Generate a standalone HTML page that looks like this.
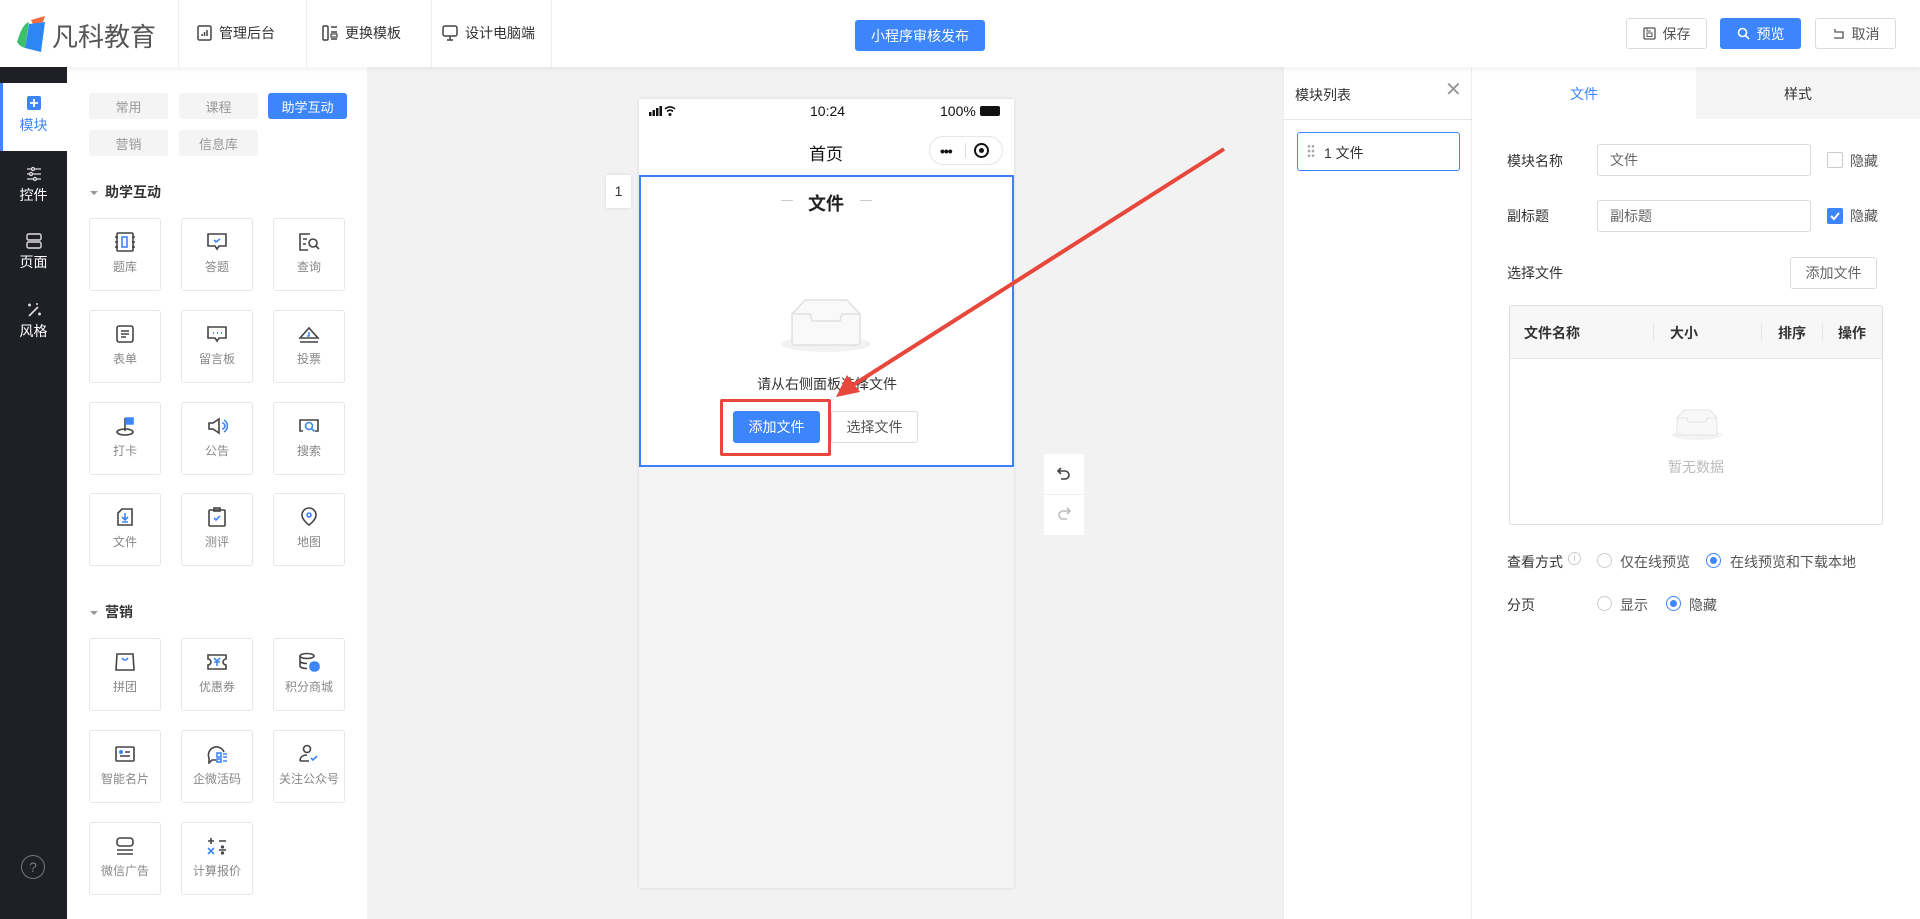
<!DOCTYPE html>
<html><head><meta charset="utf-8"><style>
*{margin:0;padding:0;box-sizing:border-box}
body{width:1920px;height:919px;overflow:hidden;font-family:"Liberation Sans","Noto Sans CJK SC",sans-serif;font-size:14px;color:#333;background:#f2f2f2;position:relative}
.a{position:absolute}
.hdr{left:0;top:0;width:1920px;height:67px;background:#fff;box-shadow:0 2px 6px rgba(0,0,0,.06);z-index:2}
.vd{top:0;height:67px;width:1px;background:#eee}
.nav{top:23px;font-size:14px;color:#333;display:flex;align-items:center;gap:7px}
.btn{border:1px solid #dcdcdc;border-radius:3px;background:#fff;display:flex;align-items:center;justify-content:center;gap:7px;font-size:14px;color:#555}
.blue{background:#3d85fb;color:#fff;border-color:#3d85fb}
.side{left:0;top:67px;width:67px;height:852px;background:#1e2025}
.si{left:0;width:67px;text-align:center;color:#fff;font-size:14px}
.p2{left:67px;top:67px;width:300px;height:852px;background:#fff}
.tab{height:26px;width:79px;border-radius:3px;background:#f4f4f4;color:#999;font-size:13px;display:flex;align-items:center;justify-content:center}
.card{width:72px;height:73px;border:1px solid #e6e6e6;border-radius:3px;background:#fff;text-align:center;font-size:12px;color:#888}
.card svg{display:block;margin:13px auto 6px}
.sec{font-size:14px;font-weight:bold;color:#333}
.sec:before{content:"";position:absolute;left:-15px;top:5px;border:4px solid transparent;border-top-color:#999;border-left-color:#999;transform:rotate(225deg) scale(.7)}
.lbl{font-size:14px;color:#333}
.inp{border:1px solid #dcdcdc;border-radius:3px;height:32px;padding-left:12px;line-height:30px;color:#666;font-size:14px}
.rad{width:15px;height:15px;border-radius:50%;border:1px solid #ccc;background:#fff}
.rad.on{border-color:#3d85fb}
.rad.on:after{content:"";position:absolute;left:3px;top:3px;width:7px;height:7px;border-radius:50%;background:#3d85fb}
</style></head><body>
<div class="a hdr">
 <svg class="a" style="left:15px;top:14px" width="34" height="40" viewBox="0 0 34 40"><path d="M16 6 L30 2 L28 8 L18 10Z" fill="#f26b3a"/><path d="M4 22 Q8 10 14 8 L10 34 Q4 32 2 28Z" fill="#3cc06a"/><path d="M14 10 L30 8 L26 38 L10 34Z" fill="#2e86f5"/></svg>
 <div class="a" style="left:52px;top:17px;font-size:26px;color:#555;letter-spacing:0px">凡科教育</div>
 <div class="a vd" style="left:178px"></div><div class="a vd" style="left:306px"></div><div class="a vd" style="left:431px"></div><div class="a vd" style="left:551px"></div>
 <div class="a nav" style="left:197px"><svg width="15" height="16" viewBox="0 0 15 16"><rect x="1" y="1" width="13" height="14" rx="1.5" fill="none" stroke="#444" stroke-width="1.5"/><path d="M5 11V9M7.5 11V7M10 11V5" stroke="#444" stroke-width="1.5"/></svg>管理后台</div>
 <div class="a nav" style="left:322px"><svg width="16" height="16" viewBox="0 0 16 16"><rect x="1" y="1" width="5" height="14" rx="1" fill="none" stroke="#444" stroke-width="1.5"/><path d="M9 2h6M9 7h6M9 14h6" stroke="#444" stroke-width="1.5"/><rect x="9" y="9" width="6" height="3" fill="none" stroke="#444" stroke-width="1.2"/></svg>更换模板</div>
 <div class="a nav" style="left:442px"><svg width="16" height="16" viewBox="0 0 16 16"><rect x="1" y="1" width="14" height="10" rx="2" fill="none" stroke="#444" stroke-width="1.5"/><path d="M8 11v4M5 15h6" stroke="#444" stroke-width="1.5"/></svg>设计电脑端</div>
 <div class="a btn blue" style="left:855px;top:20px;width:130px;height:31px;font-size:14px">小程序审核发布</div>
 <div class="a btn" style="left:1626px;top:18px;width:81px;height:31px"><svg width="13" height="13" viewBox="0 0 13 13"><rect x="1" y="1" width="11" height="11" rx="1" fill="none" stroke="#555" stroke-width="1.3"/><rect x="4" y="6" width="5" height="3.5" fill="none" stroke="#555"/><path d="M4 1v3h4" stroke="#555" fill="none"/></svg>保存</div>
 <div class="a btn blue" style="left:1720px;top:18px;width:81px;height:31px"><svg width="13" height="13" viewBox="0 0 13 13"><circle cx="5.5" cy="5.5" r="4" fill="none" stroke="#fff" stroke-width="1.6"/><path d="M8.5 8.5L12 12" stroke="#fff" stroke-width="1.6"/></svg>预览</div>
 <div class="a btn" style="left:1815px;top:18px;width:81px;height:31px"><svg width="13" height="13" viewBox="0 0 13 13"><path d="M3 2v3h8v6H2" fill="none" stroke="#555" stroke-width="1.3"/></svg>取消</div>
</div>

<div class="a side"></div>
<div class="a" style="left:0;top:83px;width:67px;height:68px;background:#fff;border-left:3px solid #3d85fb"></div>
<div class="a si" style="top:96px;color:#3d85fb"><svg width="14" height="14" viewBox="0 0 14 14"><rect width="14" height="14" rx="2" fill="#3d85fb"/><path d="M7 3v8M3 7h8" stroke="#fff" stroke-width="1.8"/></svg><div style="margin-top:2px">模块</div></div>
<div class="a si" style="top:166px"><svg width="16" height="16" viewBox="0 0 16 16" fill="none" stroke="#ddd" stroke-width="1.3"><path d="M1 3h4M9 3h6M1 8h2M7 8h8M1 13h6M11 13h4"/><circle cx="7" cy="3" r="1.5"/><circle cx="5" cy="8" r="1.5"/><circle cx="9" cy="13" r="1.5"/></svg><div>控件</div></div>
<div class="a si" style="top:233px"><svg width="16" height="16" viewBox="0 0 16 16" fill="none" stroke="#ddd" stroke-width="1.4"><rect x="1" y="1" width="14" height="6" rx="1.5"/><rect x="1" y="9" width="14" height="6" rx="1.5"/></svg><div>页面</div></div>
<div class="a si" style="top:302px"><svg width="16" height="16" viewBox="0 0 16 16" fill="none" stroke="#ddd" stroke-width="1.6"><path d="M3 14L12 5M2 3h3M3.5 1.5v3M12 12h3M13.5 10.5v3M10 2h2"/></svg><div>风格</div></div>
<div class="a" style="left:21px;top:855px;width:24px;height:24px;border:1px solid #777;border-radius:50%;color:#777;text-align:center;line-height:22px;font-size:14px">?</div>

<div class="a p2">
 <div class="a tab" style="left:22px;top:26px">常用</div>
 <div class="a tab" style="left:112px;top:26px">课程</div>
 <div class="a tab" style="left:201px;top:26px;background:#3d85fb;color:#fff">助学互动</div>
 <div class="a tab" style="left:22px;top:63px">营销</div>
 <div class="a tab" style="left:112px;top:63px">信息库</div>
 <div class="a sec" style="left:38px;top:115px">助学互动</div>
 <div class="a sec" style="left:38px;top:535px">营销</div>
</div>

<div class="a card" style="left:89px;top:218px"><svg width="22" height="20" viewBox="0 0 22 20" fill="none" stroke="#444" stroke-width="1.6"><rect x="3" y="1" width="16" height="18" rx="1"/><path d="M1 5h3M1 10h3M1 15h3M18 5h3M18 10h3M18 15h3"/><rect x="8" y="5" width="5" height="10" stroke="#3d85fb"/></svg>题库</div>
<div class="a card" style="left:181px;top:218px"><svg width="22" height="20" viewBox="0 0 22 20" fill="none" stroke="#444" stroke-width="1.6"><path d="M2 2h18v12h-7l-2 3-2-3H2z"/><path d="M8 8l2 2 4-3" stroke="#3d85fb"/></svg>答题</div>
<div class="a card" style="left:273px;top:218px"><svg width="22" height="20" viewBox="0 0 22 20" fill="none" stroke="#444" stroke-width="1.6"><path d="M12 2H2v16h8M5 7h4M5 12h3" /><circle cx="15" cy="11" r="4"/><path d="M18 14l3 3"/></svg>查询</div>
<div class="a card" style="left:89px;top:310px"><svg width="22" height="20" viewBox="0 0 22 20" fill="none" stroke="#444" stroke-width="1.6"><rect x="3" y="2" width="16" height="16" rx="2"/><path d="M7 7h8M7 10h8M7 13h5"/></svg>表单</div>
<div class="a card" style="left:181px;top:310px"><svg width="22" height="20" viewBox="0 0 22 20" fill="none" stroke="#444" stroke-width="1.6"><path d="M2 3h18v11h-7l-2 3-2-3H2z"/><path d="M7 9h1M11 9h1M15 9h1" stroke="#3d85fb" stroke-width="2"/></svg>留言板</div>
<div class="a card" style="left:273px;top:310px"><svg width="22" height="20" viewBox="0 0 22 20" fill="none" stroke="#444" stroke-width="1.6"><path d="M2 14L11 4l9 10H2zM2 18h18"/><path d="M11 8v4h-2" stroke="#3d85fb"/></svg>投票</div>
<div class="a card" style="left:89px;top:402px"><svg width="22" height="20" viewBox="0 0 22 20" fill="none" stroke="#444" stroke-width="1.6"><path d="M11 2v13"/><ellipse cx="11" cy="16" rx="8" ry="3"/><path d="M12 2h7v6h-7z" fill="#3d85fb" stroke="#3d85fb"/></svg>打卡</div>
<div class="a card" style="left:181px;top:402px"><svg width="22" height="20" viewBox="0 0 22 20" fill="none" stroke="#444" stroke-width="1.6"><path d="M3 7h4l6-4v14l-6-4H3z"/><path d="M16 7a3 3 0 010 6M18 4a7 7 0 010 12" stroke="#3d85fb"/></svg>公告</div>
<div class="a card" style="left:273px;top:402px"><svg width="22" height="20" viewBox="0 0 22 20" fill="none" stroke="#444" stroke-width="1.6"><path d="M5 15H2V4h18v11h-3"/><circle cx="11" cy="10" r="3.5" stroke="#3d85fb"/><path d="M13.5 12.5l3 3" stroke="#3d85fb"/></svg>搜索</div>
<div class="a card" style="left:89px;top:493px"><svg width="22" height="20" viewBox="0 0 22 20" fill="none" stroke="#444" stroke-width="1.6"><path d="M8 2h10v16H4V6z"/><path d="M11 6v7M8 10l3 3 3-3M8 15h6" stroke="#3d85fb"/></svg>文件</div>
<div class="a card" style="left:181px;top:493px"><svg width="22" height="20" viewBox="0 0 22 20" fill="none" stroke="#444" stroke-width="1.6"><rect x="3" y="3" width="16" height="16" rx="1"/><rect x="8" y="1" width="6" height="3"/><path d="M8 11l2 2 4-4" stroke="#3d85fb"/></svg>测评</div>
<div class="a card" style="left:273px;top:493px"><svg width="22" height="20" viewBox="0 0 22 20" fill="none" stroke="#444" stroke-width="1.6"><path d="M11 18s-7-5-7-10a7 7 0 0114 0c0 5-7 10-7 10z"/><circle cx="11" cy="8" r="2" stroke="#3d85fb"/></svg>地图</div>
<div class="a card" style="left:89px;top:638px"><svg width="22" height="20" viewBox="0 0 22 20" fill="none" stroke="#444" stroke-width="1.6"><path d="M3 2h16l1 16H2z"/><path d="M8 6q3 4 6 0" stroke="#3d85fb"/></svg>拼团</div>
<div class="a card" style="left:181px;top:638px"><svg width="22" height="20" viewBox="0 0 22 20" fill="none" stroke="#444" stroke-width="1.6"><path d="M2 3h18v4a3 3 0 000 6v4H2v-4a3 3 0 000-6z"/><path d="M8 6l3 3 3-3M11 9v5M8 10h6" stroke="#3d85fb"/></svg>优惠券</div>
<div class="a card" style="left:273px;top:638px"><svg width="22" height="20" viewBox="0 0 22 20" fill="none" stroke="#444" stroke-width="1.6"><ellipse cx="9" cy="4" rx="7" ry="2.5"/><path d="M2 4v10c0 1.5 3 2.5 7 2.5M2 9c0 1.5 3 2.5 7 2.5"/><rect x="12" y="10" width="9" height="9" rx="4" fill="#3d85fb" stroke="#3d85fb"/></svg>积分商城</div>
<div class="a card" style="left:89px;top:730px"><svg width="22" height="20" viewBox="0 0 22 20" fill="none" stroke="#444" stroke-width="1.6"><rect x="2" y="3" width="18" height="14" rx="1"/><path d="M6 8h2M11 8h5M6 12h10"/><circle cx="7" cy="8" r="1.2" fill="#3d85fb" stroke="#3d85fb"/></svg>智能名片</div>
<div class="a card" style="left:181px;top:730px"><svg width="22" height="20" viewBox="0 0 22 20" fill="none" stroke="#444" stroke-width="1.6"><path d="M10 16H6l-3 3v-5a8 8 0 1115-6"/><rect x="11" y="9" width="4" height="4" stroke="#3d85fb"/><rect x="11" y="15" width="4" height="3" stroke="#3d85fb"/><path d="M17 10h4M17 13h4M17 17h4" stroke="#3d85fb"/></svg>企微活码</div>
<div class="a card" style="left:273px;top:730px"><svg width="22" height="20" viewBox="0 0 22 20" fill="none" stroke="#444" stroke-width="1.6"><circle cx="9" cy="5" r="3.5"/><path d="M2 17c0-4 3-6 7-6M2 17h9"/><path d="M13 14l2 2 4-4" stroke="#3d85fb"/></svg>关注公众号</div>
<div class="a card" style="left:89px;top:822px"><svg width="22" height="20" viewBox="0 0 22 20" fill="none" stroke="#444" stroke-width="1.6"><rect x="3" y="2" width="16" height="8" rx="3"/><path d="M3 14h16M3 18h16"/></svg>微信广告</div>
<div class="a card" style="left:181px;top:822px"><svg width="22" height="20" viewBox="0 0 22 20" fill="none" stroke="#444" stroke-width="1.6"><path d="M2 5h6M5 2v6M13 5h7M13 14h7"/><path d="M2 12l6 6M8 12l-6 6" stroke="#3d85fb"/><circle cx="16.5" cy="11" r=".8" fill="#444"/><circle cx="16.5" cy="17" r=".8" fill="#444"/></svg>计算报价</div>

<div class="a" style="left:639px;top:99px;width:375px;height:789px;background:#f3f3f3;box-shadow:0 0 3px rgba(0,0,0,.12)"></div>
<div class="a" style="left:639px;top:99px;width:375px;height:76px;background:#fff"></div>
<svg class="a" style="left:648px;top:104px" width="30" height="14" viewBox="0 0 30 14"><rect x="1" y="8" width="2.5" height="4" fill="#111"/><rect x="4.5" y="6" width="2.5" height="6" fill="#111"/><rect x="8" y="4" width="2.5" height="8" fill="#111"/><rect x="11.5" y="2" width="2.5" height="10" fill="#111"/><path d="M17 5a7 7 0 0110 0M19 7.5a4 4 0 016 0" stroke="#111" stroke-width="1.6" fill="none"/><circle cx="22" cy="10.5" r="1.5" fill="#111"/></svg>
<div class="a" style="left:810px;top:103px;font-size:14px;color:#111">10:24</div>
<div class="a" style="left:940px;top:103px;font-size:14px;color:#111">100%</div>
<div class="a" style="left:980px;top:106px;width:20px;height:10px;background:#111;border-radius:2px"></div>
<div class="a" style="left:809px;top:140px;font-size:17px;color:#111">首页</div>
<div class="a" style="left:929px;top:136px;width:74px;height:29px;border:1px solid #e6e6e6;border-radius:15px;background:#fff"></div>
<div class="a" style="left:940px;top:143px;font-size:14px;font-weight:bold;color:#111;letter-spacing:-1px">•••</div>
<div class="a" style="left:965px;top:143px;width:1px;height:15px;background:#ddd"></div>
<div class="a" style="left:974px;top:143px;width:15px;height:15px;border:2px solid #111;border-radius:50%"></div>
<div class="a" style="left:981px;top:150px;width:5px;height:5px;margin:-2px 0 0 -2px;background:#111;border-radius:50%"></div>
<div class="a" style="left:606px;top:175px;width:25px;height:33px;background:#fff;box-shadow:0 0 3px rgba(0,0,0,.12);text-align:center;line-height:33px;font-size:14px">1</div>
<div class="a" style="left:639px;top:175px;width:375px;height:292px;background:#fff;border:2px solid #3d7ff7"></div>
<div class="a" style="left:781px;top:200px;width:12px;height:1px;background:#ccc"></div>
<div class="a" style="left:860px;top:200px;width:12px;height:1px;background:#ccc"></div>
<div class="a" style="left:808px;top:190px;font-size:18px;font-weight:bold;color:#222">文件</div>
<svg class="a" style="left:778px;top:290px" width="96" height="64" viewBox="0 0 96 64"><ellipse cx="48" cy="54" rx="45" ry="8" fill="#f2f2f2"/><path d="M14 24L27 10h42l13 14v28a3 3 0 01-3 3H17a3 3 0 01-3-3z" fill="#f9f9f9" stroke="#e0e0e0" stroke-width="1.5"/><path d="M14 24h18l2 7h28l2-7h18" fill="none" stroke="#e0e0e0" stroke-width="1.5"/></svg>
<div class="a" style="left:757px;top:374px;font-size:14px;color:#333">请从右侧面板选择文件</div>
<div class="a btn blue" style="left:733px;top:411px;width:87px;height:32px;font-size:14px">添加文件</div>
<div class="a btn" style="left:831px;top:411px;width:87px;height:32px;font-size:14px">选择文件</div>
<div class="a" style="left:720px;top:399px;width:111px;height:57px;border:3px solid #e8473c;border-radius:2px"></div>
<div class="a" style="left:1044px;top:454px;width:40px;height:81px;background:#fff"></div>
<div class="a" style="left:1044px;top:494px;width:40px;height:1px;background:#eee"></div>
<svg class="a" style="left:1055px;top:465px" width="18" height="18" viewBox="0 0 18 18" fill="none" stroke="#444" stroke-width="1.6"><path d="M6 3L3 6l3 3M3 6h7a4 4 0 010 8H6"/></svg>
<svg class="a" style="left:1055px;top:505px" width="18" height="18" viewBox="0 0 18 18" fill="none" stroke="#bbb" stroke-width="1.6"><path d="M12 3l3 3-3 3M15 6H8a4 4 0 000 8h4"/></svg>
<svg class="a" style="left:0;top:0" width="1920" height="919" viewBox="0 0 1920 919"><path d="M1224 149L850 387" stroke="#e8473c" stroke-width="4"/><path d="M836 397l11-22 13 17z" fill="#e8473c"/></svg>

<div class="a" style="left:1283px;top:67px;width:189px;height:852px;background:#fff;border-left:1px solid #eee;border-right:1px solid #eee"></div>
<div class="a" style="left:1283px;top:119px;width:189px;height:1px;background:#e6e6e6"></div>
<div class="a" style="left:1295px;top:85px;font-size:14px;color:#333">模块列表</div>
<div class="a" style="left:1445px;top:80px;font-size:20px;color:#999;line-height:20px">✕</div>
<div class="a" style="left:1297px;top:132px;width:163px;height:39px;border:1px solid #3d85fb;border-radius:3px"></div>
<div class="a" style="left:1307px;top:144px;width:8px;height:14px;background:radial-gradient(circle,#aaa 1.2px,transparent 1.5px) 0 0/4px 4.7px"></div>
<div class="a" style="left:1324px;top:143px;font-size:14px;color:#333">1 文件</div>

<div class="a" style="left:1472px;top:67px;width:448px;height:852px;background:#fff"></div>
<div class="a" style="left:1696px;top:67px;width:224px;height:52px;background:#f5f5f5"></div>
<div class="a" style="left:1570px;top:84px;font-size:14px;color:#3d85fb">文件</div>
<div class="a" style="left:1784px;top:84px;font-size:14px;color:#333">样式</div>
<div class="a lbl" style="left:1507px;top:151px">模块名称</div>
<div class="a inp" style="left:1597px;top:144px;width:214px">文件</div>
<div class="a" style="left:1827px;top:152px;width:16px;height:16px;border:1px solid #ccc;border-radius:2px"></div>
<div class="a lbl" style="left:1850px;top:151px;color:#555">隐藏</div>
<div class="a lbl" style="left:1507px;top:206px">副标题</div>
<div class="a inp" style="left:1597px;top:200px;width:214px">副标题</div>
<div class="a" style="left:1827px;top:208px;width:16px;height:16px;background:#3d85fb;border-radius:2px"><svg width="16" height="16" viewBox="0 0 16 16"><path d="M4 8l3 3 5-6" fill="none" stroke="#fff" stroke-width="2"/></svg></div>
<div class="a lbl" style="left:1850px;top:206px;color:#555">隐藏</div>
<div class="a lbl" style="left:1507px;top:263px">选择文件</div>
<div class="a btn" style="left:1790px;top:257px;width:87px;height:32px;color:#666">添加文件</div>
<div class="a" style="left:1509px;top:305px;width:374px;height:220px;border:1px solid #ddd;border-radius:3px;overflow:hidden">
 <div style="height:53px;background:#f7f7f7;border-bottom:1px solid #e6e6e6;position:relative;font-weight:bold;font-size:14px;color:#333">
  <span class="a" style="left:14px;top:17px">文件名称</span>
  <span class="a" style="left:143px;top:17px;width:1px;height:18px;background:#e6e6e6"></span>
  <span class="a" style="left:160px;top:17px">大小</span>
  <span class="a" style="left:251px;top:17px;width:1px;height:18px;background:#e6e6e6"></span>
  <span class="a" style="left:268px;top:17px">排序</span>
  <span class="a" style="left:312px;top:17px;width:1px;height:18px;background:#e6e6e6"></span>
  <span class="a" style="left:328px;top:17px">操作</span>
 </div>
</div>
<svg class="a" style="left:1670px;top:404px" width="54" height="38" viewBox="0 0 54 38"><ellipse cx="27" cy="31" rx="25" ry="5" fill="#f3f3f3"/><path d="M7 14L14 6h26l7 8v15a2 2 0 01-2 2H9a2 2 0 01-2-2z" fill="#f8f8f8" stroke="#e3e3e3"/><path d="M7 14h10l1 4h18l1-4h10" fill="none" stroke="#e3e3e3"/></svg>
<div class="a" style="left:1668px;top:457px;font-size:14px;color:#bbb">暂无数据</div>
<div class="a lbl" style="left:1507px;top:552px">查看方式</div>
<div class="a" style="left:1568px;top:552px;width:13px;height:13px;border:1px solid #ccc;border-radius:50%;font-size:9px;color:#bbb;text-align:center;line-height:11px">i</div>
<div class="a rad" style="left:1597px;top:553px"></div>
<div class="a lbl" style="left:1620px;top:552px;color:#555">仅在线预览</div>
<div class="a rad on" style="left:1706px;top:553px"></div>
<div class="a lbl" style="left:1730px;top:552px;color:#555">在线预览和下载本地</div>
<div class="a lbl" style="left:1507px;top:595px">分页</div>
<div class="a rad" style="left:1597px;top:596px"></div>
<div class="a lbl" style="left:1620px;top:595px;color:#555">显示</div>
<div class="a rad on" style="left:1666px;top:596px"></div>
<div class="a lbl" style="left:1689px;top:595px;color:#555">隐藏</div>
</body></html>
